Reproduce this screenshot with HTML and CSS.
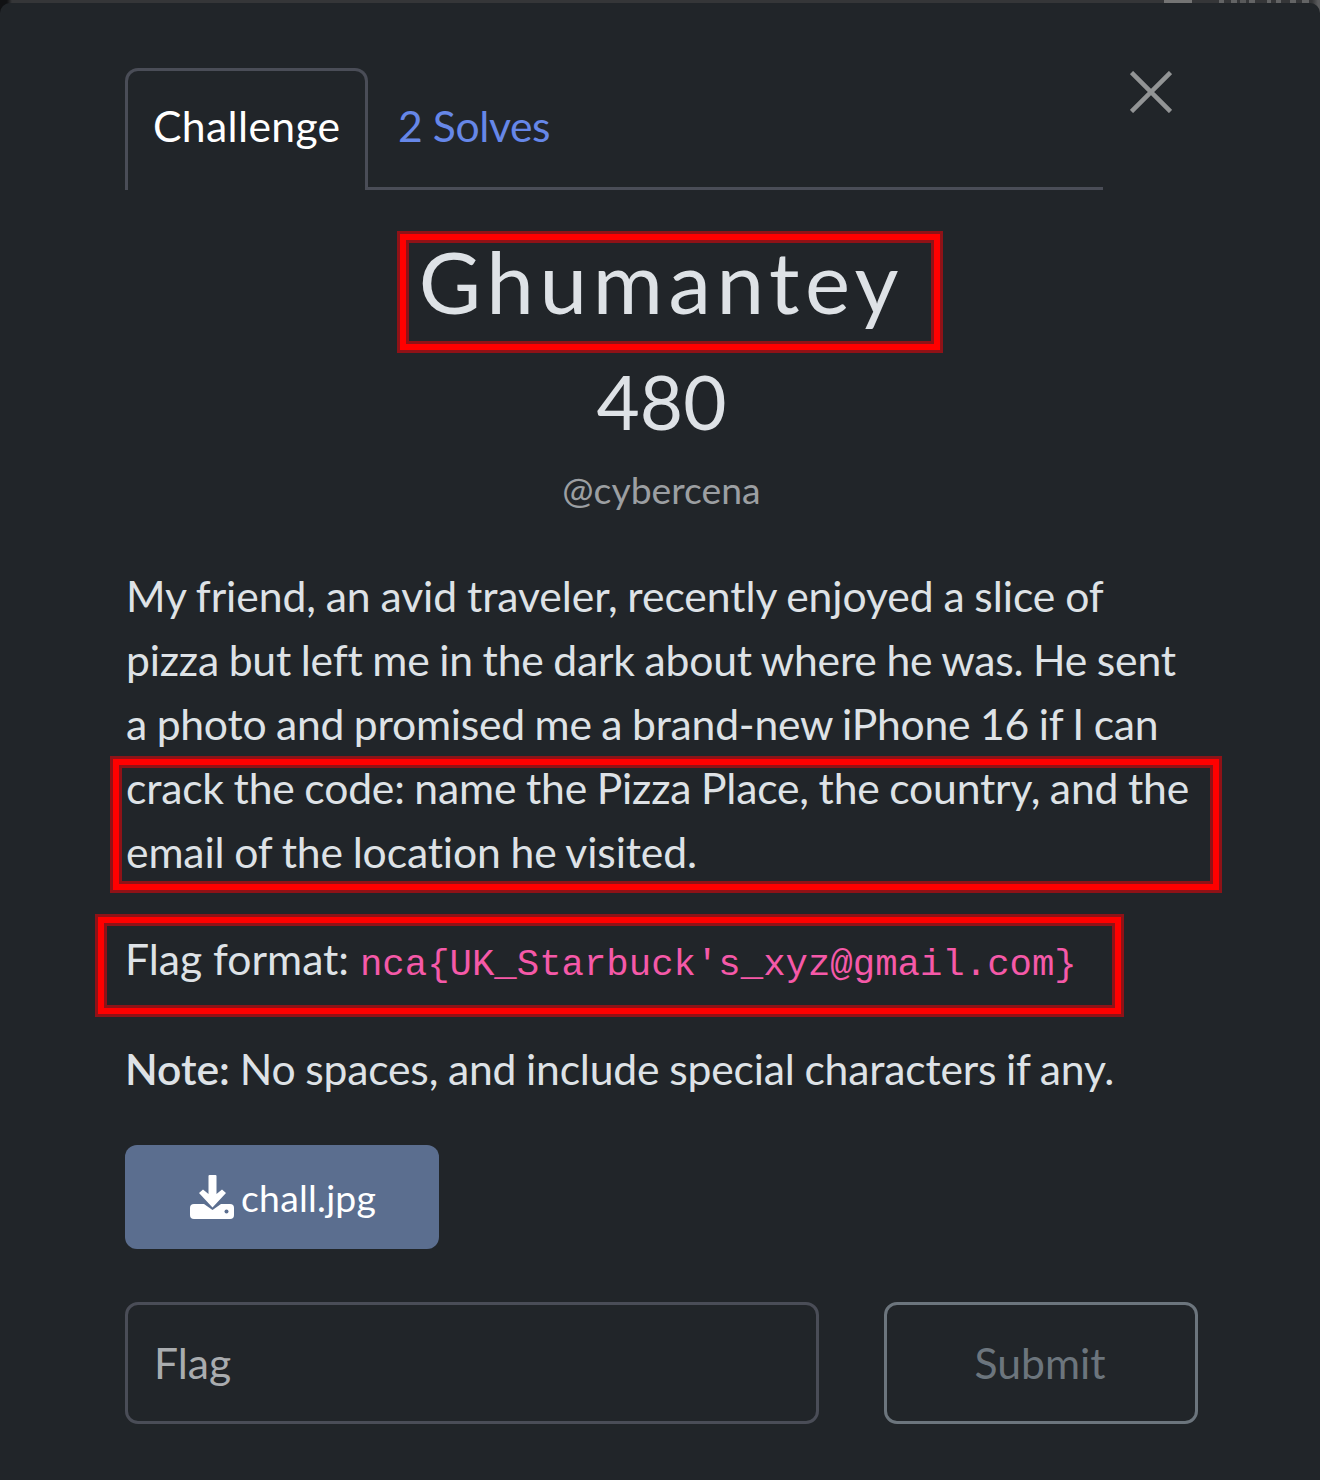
FILE: index.html
```html
<!DOCTYPE html>
<html lang="en">
<head>
<meta charset="utf-8">
<title>Ghumantey</title>
<link rel="stylesheet" href="styles.css">
</head>
<body>
<div class="backdrop"><span class="bd-dash"></span><span class="bd-text"></span></div>
<main class="modal">
  <header class="head">
    <nav class="tabs">
      <a class="tab active">Challenge</a>
      <a class="tab solves">2 Solves</a>
    </nav>
    <svg class="close" viewBox="0 0 42 42"><path d="M1.500 1.500L40.500 40.500M40.500 1.500L1.500 40.500"/></svg>
  </header>
  <h2 class="name">Ghumantey</h2>
  <h3 class="value">480</h3>
  <p class="author">@cybercena</p>
  <section class="desc">
    <p><span class="line l1">My friend, an avid traveler, recently enjoyed a slice of</span><span class="line l2">pizza but left me in the dark about where he was. He sent</span><span class="line l3">a photo and promised me a brand-new iPhone 16 if I can</span><span class="line l4">crack the code: name the Pizza Place, the country, and the</span><span class="line l5">email of the location he visited.</span></p>
    <p class="format">Flag format: <code>nca{UK_Starbuck's_xyz@gmail.com}</code></p>
    <p class="note"><strong>Note:</strong><span class="l6"> No spaces, and include special characters if any.</span></p>
  </section>
  <a class="file">
    <svg class="dl" viewBox="0 0 44 44"><path d="M4 29H40Q44 29 44 33V40Q44 44 40 44H4Q0 44 0 40V33Q0 29 4 29Z"/><path class="gap" d="M14 29L22.500 35L31 29Z"/><path d="M18.500 1Q18.500 0 19.500 0H25.500Q26.500 0 26.500 1V19L32 14.500L36 18L22.500 32.500L9 18L13 14.500L18.500 19Z"/><circle cx="36.500" cy="36.500" r="2"/></svg>
    <span>chall.jpg</span>
  </a>
  <form class="answer">
    <div class="input">Flag</div>
    <div class="submit">Submit</div>
  </form>
  <div class="mark mark-name"></div>
  <div class="mark mark-task"></div>
  <div class="mark mark-format"></div>
</main>
</body>
</html>
```
FILE: styles.css
```css
* { box-sizing: border-box; }
body {
  margin: 0;
  width: 1320px;
  height: 1480px;
  overflow: hidden;
  background: linear-gradient(90deg, #111214 0 7px, #353638 12px 1312px, #5a5b5d 1318px);
  color: #dee2e6;
  font-family: Lato, sans-serif;
  font-size: 42.67px;
  line-height: 64px;
  font-variant-ligatures: none;
}
h2, h3, p { margin: 0; font-weight: 400; }
.backdrop { height: 3px; display: flex; padding-left: 1164px; }
.bd-dash { width: 28px; background: #747474; margin-right: 27px; }
.bd-text {
  width: 90px;
  background: linear-gradient(90deg, #636465 0 5px, #353638 5px 12px, #636465 12px 18px, #353638 18px 21px, #58595a 21px 27px, #353638 27px 30px, #636465 30px 36px, #353638 36px 48px, #636465 48px 52px, #353638 52px 57px, #636465 57px 62px, #353638 62px 71px, #636465 71px 77px, #353638 77px 83px, #636465 83px);
}
.modal {
  position: relative;
  height: 1477px;
  padding: 65px 122px 0 125px;
  background: #212529;
  border-radius: 10px 10px 0 0;
}
.head { display: flex; align-items: flex-start; height: 122px; }
.tabs { display: flex; width: 978px; height: 122px; }
.tab { line-height: 64px; white-space: nowrap; }
.active {
  width: 243px;
  padding: 23px 0 0 25px;
  border: 3px solid #4a4d57;
  border-bottom: 0;
  border-radius: 13px 13px 0 0;
  color: #fff;
  letter-spacing: 0.35px;
}
.solves {
  width: 735px;
  padding: 26px 0 0 30px;
  border-bottom: 3px solid #4a4d57;
  color: #6687e8;
  letter-spacing: -0.4px;
}
.close { width: 42px; height: 42px; margin: 3px 0 0 27px; fill: none; stroke: #929495; stroke-width: 4.5; }
.name { margin-top: 40px; font-size: 85.33px; line-height: 102px; letter-spacing: 5.6px; text-align: center; }
.value { margin-top: 24px; font-size: 74.67px; line-height: 90px; text-align: center; }
.author { margin-top: 16px; font-size: 37.33px; line-height: 56px; color: #9c9fa2; text-align: center; }
.desc { margin-top: 46px; }
.line { display: block; padding-left: 1px; white-space: nowrap; word-spacing: -1px; }
.l1 { letter-spacing: -0.07px; }
.l2 { letter-spacing: -0.2px; }
.l3 { letter-spacing: -0.24px; }
.l4 { letter-spacing: -0.19px; }
.l5 { letter-spacing: -0.13px; }
.l6 { letter-spacing: -0.18px; word-spacing: -1px; }
.format, .note { white-space: nowrap; }
.format { height: 64px; margin-top: 43px; }
.note { margin-top: 46px; }
code { font-family: "Liberation Mono", monospace; font-size: 37.33px; color: #f559a8; }
strong { font-weight: 600; }
.file {
  display: flex;
  align-items: center;
  gap: 7px;
  width: 314px;
  height: 104px;
  margin-top: 44px;
  padding-left: 65px;
  border-radius: 12px;
  background: #5b6e8f;
  color: #fff;
  font-size: 37.33px;
  letter-spacing: 0.25px;
}
.file span { padding-top: 2px; }
.dl { width: 44px; height: 44px; fill: #fff; }
.dl .gap, .dl circle { fill: #5b6e8f; }
.answer { display: flex; justify-content: space-between; width: 1073px; height: 122px; margin-top: 53px; }
.input, .submit { border: 3px solid #4a4d57; border-radius: 13px; line-height: 116px; }
.input { width: 694px; padding-left: 26px; color: #a9acaf; }
.submit { width: 314px; padding-right: 2px; border-color: #6c757d; color: #6c757d; text-align: center; }
.mark { position: absolute; border: 6px solid #f00; box-shadow: 0 0 0 3px #8f1217, inset 0 0 0 3px #8f1217; }
.mark-name { left: 400px; top: 231px; width: 540px; height: 116px; }
.mark-task { left: 113px; top: 756px; width: 1106px; height: 131px; }
.mark-format { left: 98px; top: 914px; width: 1023px; height: 97px; }
```
